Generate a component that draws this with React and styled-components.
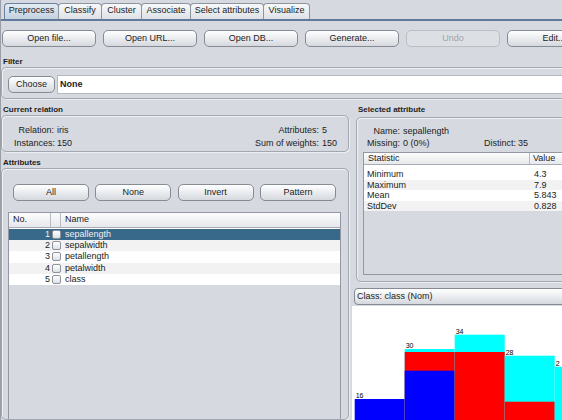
import React from 'react';
import styled, { createGlobalStyle } from 'styled-components';

const GlobalStyle = createGlobalStyle`
  html, body {
    margin: 0;
    padding: 0;
    background: #d6d9df;
  }
  body {
    font-family: "Liberation Sans", Arial, sans-serif;
  }
`;

const tabs = [
  { label: 'Preprocess', w: 55, active: true },
  { label: 'Classify', w: 44 },
  { label: 'Cluster', w: 41 },
  { label: 'Associate', w: 50 },
  { label: 'Select attributes', w: 74 },
  { label: 'Visualize', w: 47 },
];

const attributes = ['sepallength', 'sepalwidth', 'petallength', 'petalwidth', 'class'];

const stats = [
  ['Minimum', '4.3'],
  ['Maximum', '7.9'],
  ['Mean', '5.843'],
  ['StdDev', '0.828'],
];

// bar tops measured in chart pixels, drawn back to front
const bins = [
  { label: '16', segs: [['#0000ff', 93]] },
  { label: '30', segs: [['#00ffff', 43], ['#ff0000', 46], ['#0000ff', 64.7]] },
  { label: '34', segs: [['#00ffff', 28.7], ['#ff0000', 46]] },
  { label: '28', segs: [['#00ffff', 49.7], ['#ff0000', 95.7]] },
  { label: '2', segs: [['#00ffff', 60.7]] },
];

function Histogram() {
  return (
    <svg width="220" height="114" viewBox="0 0 220 114">
      {bins.map((b, i) => {
        const x = 2.7 + i * 50;
        return (
          <g key={i}>
            {b.segs.map(([c, top]) => (
              <rect key={c} x={x} y={top} width="50" height={200 - top} fill={c} />
            ))}
            <text x={x + 1} y={b.segs[0][1] - 1} fontSize="7" fill="#000"
              fontFamily="Liberation Sans, Arial, sans-serif">{b.label}</text>
          </g>
        );
      })}
    </svg>
  );
}

function App() {
  return (
    <>
      <GlobalStyle />
      <Frame>
        <TabBar>
          {tabs.map(t => (
            <Tab key={t.label} $w={t.w} $active={t.active}>{t.label}</Tab>
          ))}
        </TabBar>

        <ButtonRow>
          <Button $w={94}>Open file...</Button>
          <Button $w={94}>Open URL...</Button>
          <Button $w={94}>Open DB...</Button>
          <Button $w={94}>Generate...</Button>
          <Button $w={94} disabled>Undo</Button>
          <Button $w={94}>Edit...</Button>
        </ButtonRow>

        <SectionTitle $top={10}>Filter</SectionTitle>
        <FilterPanel>
          <Button $w={47}>Choose</Button>
          <FilterField>None</FilterField>
        </FilterPanel>

        <Columns>
          <LeftColumn>
            <SectionTitle>Current relation</SectionTitle>
            <RelationPanel>
              <InfoGrid $cols="40px auto">
                <Key>Relation:</Key><span>iris</span>
                <Key>Instances:</Key><span>150</span>
              </InfoGrid>
              <InfoGrid $cols="auto 18px">
                <Key>Attributes:</Key><span>5</span>
                <Key>Sum of weights:</Key><span>150</span>
              </InfoGrid>
            </RelationPanel>

            <SectionTitle $top={6}>Attributes</SectionTitle>
            <AttributesPanel>
              <SelectRow>
                <Button $w={76}>All</Button>
                <Button $w={76}>None</Button>
                <Button $w={76}>Invert</Button>
                <Button $w={76}>Pattern</Button>
              </SelectRow>
              <AttrPane>
                <AttrHeader>
                  <HeadCell>No.</HeadCell>
                  <HeadCell />
                  <HeadCell $last>Name</HeadCell>
                </AttrHeader>
                <AttrBody>
                  {attributes.map((name, i) => (
                    <AttrRow key={name} $alt={i % 2 === 1} $selected={i === 0}>
                      <NumCell>{i + 1}</NumCell>
                      <CheckCell><CheckBox /></CheckCell>
                      <NameCell>{name}</NameCell>
                    </AttrRow>
                  ))}
                </AttrBody>
              </AttrPane>
            </AttributesPanel>
          </LeftColumn>

          <RightColumn>
            <SectionTitle $left={6}>Selected attribute</SectionTitle>
            <SelectedPanel>
              <SelectedGrid>
                <Key>Name:</Key><WideVal>sepallength</WideVal>
                <Key>Missing:</Key><span>0 (0%)</span>
                <Key>Distinct:</Key><span>35</span>
              </SelectedGrid>
              <StatsPane>
                <StatsHeader>
                  <HeadCell $pad={4}>Statistic</HeadCell>
                  <HeadCell $pad={3} $last>Value</HeadCell>
                </StatsHeader>
                <StatsBody>
                  {stats.map(([k, v], i) => (
                    <StatsRow key={k} $alt={i % 2 === 1}>
                      <span>{k}</span>
                      <span>{v}</span>
                    </StatsRow>
                  ))}
                </StatsBody>
              </StatsPane>
            </SelectedPanel>
            <ClassCombo>Class: class (Nom)</ClassCombo>
            <ChartArea>
              <Histogram />
            </ChartArea>
          </RightColumn>
        </Columns>
      </Frame>
    </>
  );
}

const Frame = styled.div`
  width: 562px;
  height: 420px;
  box-sizing: border-box;
  overflow: hidden;
  background: #d6d9df;
  border-left: 1px solid #9a9ea6;
  font-family: "Liberation Sans", Arial, sans-serif;
  font-size: 9px;
  color: #1c1c1c;
  display: flex;
  flex-direction: column;
`

const TabBar = styled.div`
  display: flex;
  align-items: flex-end;
  height: 16px;
  padding: 3px 0 0 3px;
  border-bottom: 2px solid #61799a;
  flex-shrink: 0;
`

const Tab = styled.div`
  width: ${p => p.$w}px;
  height: 16px;
  box-sizing: border-box;
  margin-right: -1px;
  border: 1px solid ${p => p.$active ? '#6a82a0' : '#8f959e'};
  border-bottom: none;
  border-radius: 4px 4px 0 0;
  background: ${p => p.$active
    ? 'linear-gradient(#e4ebf3, #c3d1e0)'
    : 'linear-gradient(#f7f8f9, #dee1e6)'};
  text-align: center;
  line-height: 13px;
  white-space: nowrap;
  flex-shrink: 0;
`

const ButtonRow = styled.div`
  display: flex;
  gap: 7px;
  margin-top: 9px;
  padding-left: 1px;
  flex-shrink: 0;
`

const Button = styled.button`
  width: ${p => p.$w}px;
  height: 17px;
  box-sizing: border-box;
  flex-shrink: 0;
  padding: 0;
  margin: 0;
  border: 1px solid #878b93;
  border-radius: 5px;
  background: linear-gradient(#ffffff, #eceef1 45%, #d5d8dd);
  font-family: inherit;
  font-size: 9px;
  line-height: 15px;
  color: #1c1c1c;
  white-space: nowrap;
  overflow: hidden;

  &:disabled {
    color: #a2a5aa;
    border-color: #bcbfc5;
    background: #dcdfe4;
  }
`

const SectionTitle = styled.div`
  font-size: 8px;
  font-weight: bold;
  line-height: 10px;
  height: 10px;
  margin-top: ${p => p.$top || 0}px;
  padding-left: ${p => p.$left || 2}px;
  white-space: nowrap;
  flex-shrink: 0;
`

const Panel = styled.div`
  box-sizing: border-box;
  border: 1px solid #a3a7af;
  border-radius: 5px;
  box-shadow: inset 1px 1px 0 #eef0f3, 1px 1px 0 #eceef1;
`

const FilterPanel = styled(Panel)`
  display: flex;
  align-items: center;
  gap: 2px;
  height: 32px;
  margin-right: -12px;
  padding: 3px 0 0 6px;
  flex-shrink: 0;
`

const FilterField = styled.div`
  flex: 1;
  height: 19px;
  box-sizing: border-box;
  background: #ffffff;
  border: 1px solid #b4b8bf;
  font-weight: bold;
  line-height: 17px;
  padding-left: 2px;
`

const Columns = styled.div`
  display: flex;
  gap: 3px;
  margin-top: 6px;
  flex: 1;
  min-height: 0;
`

const LeftColumn = styled.div`
  width: 348px;
  flex-shrink: 0;
  display: flex;
  flex-direction: column;
`

const RightColumn = styled.div`
  width: 262px;
  flex-shrink: 0;
  display: flex;
  flex-direction: column;
`

const RelationPanel = styled(Panel)`
  height: 37px;
  display: flex;
  justify-content: space-between;
  padding: 9px 8px 0 12px;
  flex-shrink: 0;
`

const InfoGrid = styled.div`
  display: grid;
  grid-template-columns: ${p => p.$cols};
  column-gap: 3px;
  line-height: 11px;
  white-space: nowrap;
`

const Key = styled.span`
  text-align: right;
`

const AttributesPanel = styled(Panel)`
  flex: 1;
  display: flex;
  flex-direction: column;
  padding: 15px 0 0 6px;
  min-height: 0;
`

const SelectRow = styled.div`
  display: flex;
  gap: 6.3px;
  padding-left: 5px;
`

const AttrPane = styled.div`
  flex: 1;
  width: 333px;
  box-sizing: border-box;
  margin-top: 11px;
  border: 1px solid #9297a1;
  border-bottom: none;
  background: #d6d9df;
`

const AttrHeader = styled.div`
  display: grid;
  grid-template-columns: 42px 10px 1fr;
  height: 14px;
  border-bottom: 1px solid #a7abb3;
  background: linear-gradient(#fdfdfd, #e6e8eb);
`

const HeadCell = styled.div`
  line-height: 13px;
  padding-left: ${p => p.$pad ?? 4}px;
  border-right: ${p => p.$last ? 'none' : '1px solid #b7bbc2'};
  white-space: nowrap;
`

const AttrBody = styled.div`
  background: #ffffff;
  padding-top: 1px;
`

const AttrRow = styled.div`
  display: grid;
  grid-template-columns: 42px 10px 1fr;
  height: 11.2px;
  line-height: 11.2px;
  background: ${p => p.$selected ? '#39698a' : p.$alt ? '#f2f2f2' : '#ffffff'};
  color: ${p => p.$selected ? '#f0f0f0' : '#1c1c1c'};
`

const NumCell = styled.div`
  text-align: right;
  padding-right: 1px;
`

const CheckCell = styled.div`
  display: flex;
  align-items: center;
  padding-left: 1px;
`

const CheckBox = styled.div`
  width: 9px;
  height: 9px;
  box-sizing: border-box;
  border: 1px solid #8d929b;
  border-radius: 2px;
  background: linear-gradient(#ffffff, #dde0e5);
`

const NameCell = styled.div`
  padding-left: 4px;
`

const SelectedPanel = styled(Panel)`
  height: 165px;
  margin: 2px 0 0 4px;
  padding: 7px 0 6px 6px;
  display: flex;
  flex-direction: column;
  flex-shrink: 0;
`

const SelectedGrid = styled.div`
  display: grid;
  grid-template-columns: 34px 78px 31px auto;
  column-gap: 3px;
  line-height: 12px;
  margin-left: 3px;
  white-space: nowrap;
`

const WideVal = styled.span`
  grid-column: 2 / 5;
`

const StatsPane = styled.div`
  flex: 1;
  margin-top: 3px;
  border: 1px solid #9297a1;
  border-right: none;
  background: #d6d9df;
`

const StatsHeader = styled.div`
  display: grid;
  grid-template-columns: 166px 1fr;
  height: 11px;
  border-bottom: 1px solid #a7abb3;
  background: linear-gradient(#fdfdfd, #e6e8eb);

  ${HeadCell} {
    line-height: 11px;
  }
`

const StatsBody = styled.div`
  background: #ffffff;
  padding-top: 4px;
`

const StatsRow = styled.div`
  display: grid;
  grid-template-columns: 166px 1fr;
  height: 10.6px;
  line-height: 10.6px;
  background: ${p => p.$alt ? '#f2f2f2' : '#ffffff'};

  span:first-child {
    padding-left: 3px;
  }
  span:last-child {
    padding-left: 4px;
  }
`

const ClassCombo = styled.div`
  height: 17px;
  box-sizing: border-box;
  margin: 6px 0 0 2px;
  border: 1px solid #878b93;
  border-radius: 4px;
  background: linear-gradient(#ffffff, #eceef1 45%, #d5d8dd);
  line-height: 15px;
  padding-left: 2px;
  flex-shrink: 0;
`

const ChartArea = styled.div`
  flex: 1;
  margin-top: 1px;
  background: #ffffff;
  overflow: hidden;

  svg {
    display: block;
  }
`

export default App;
